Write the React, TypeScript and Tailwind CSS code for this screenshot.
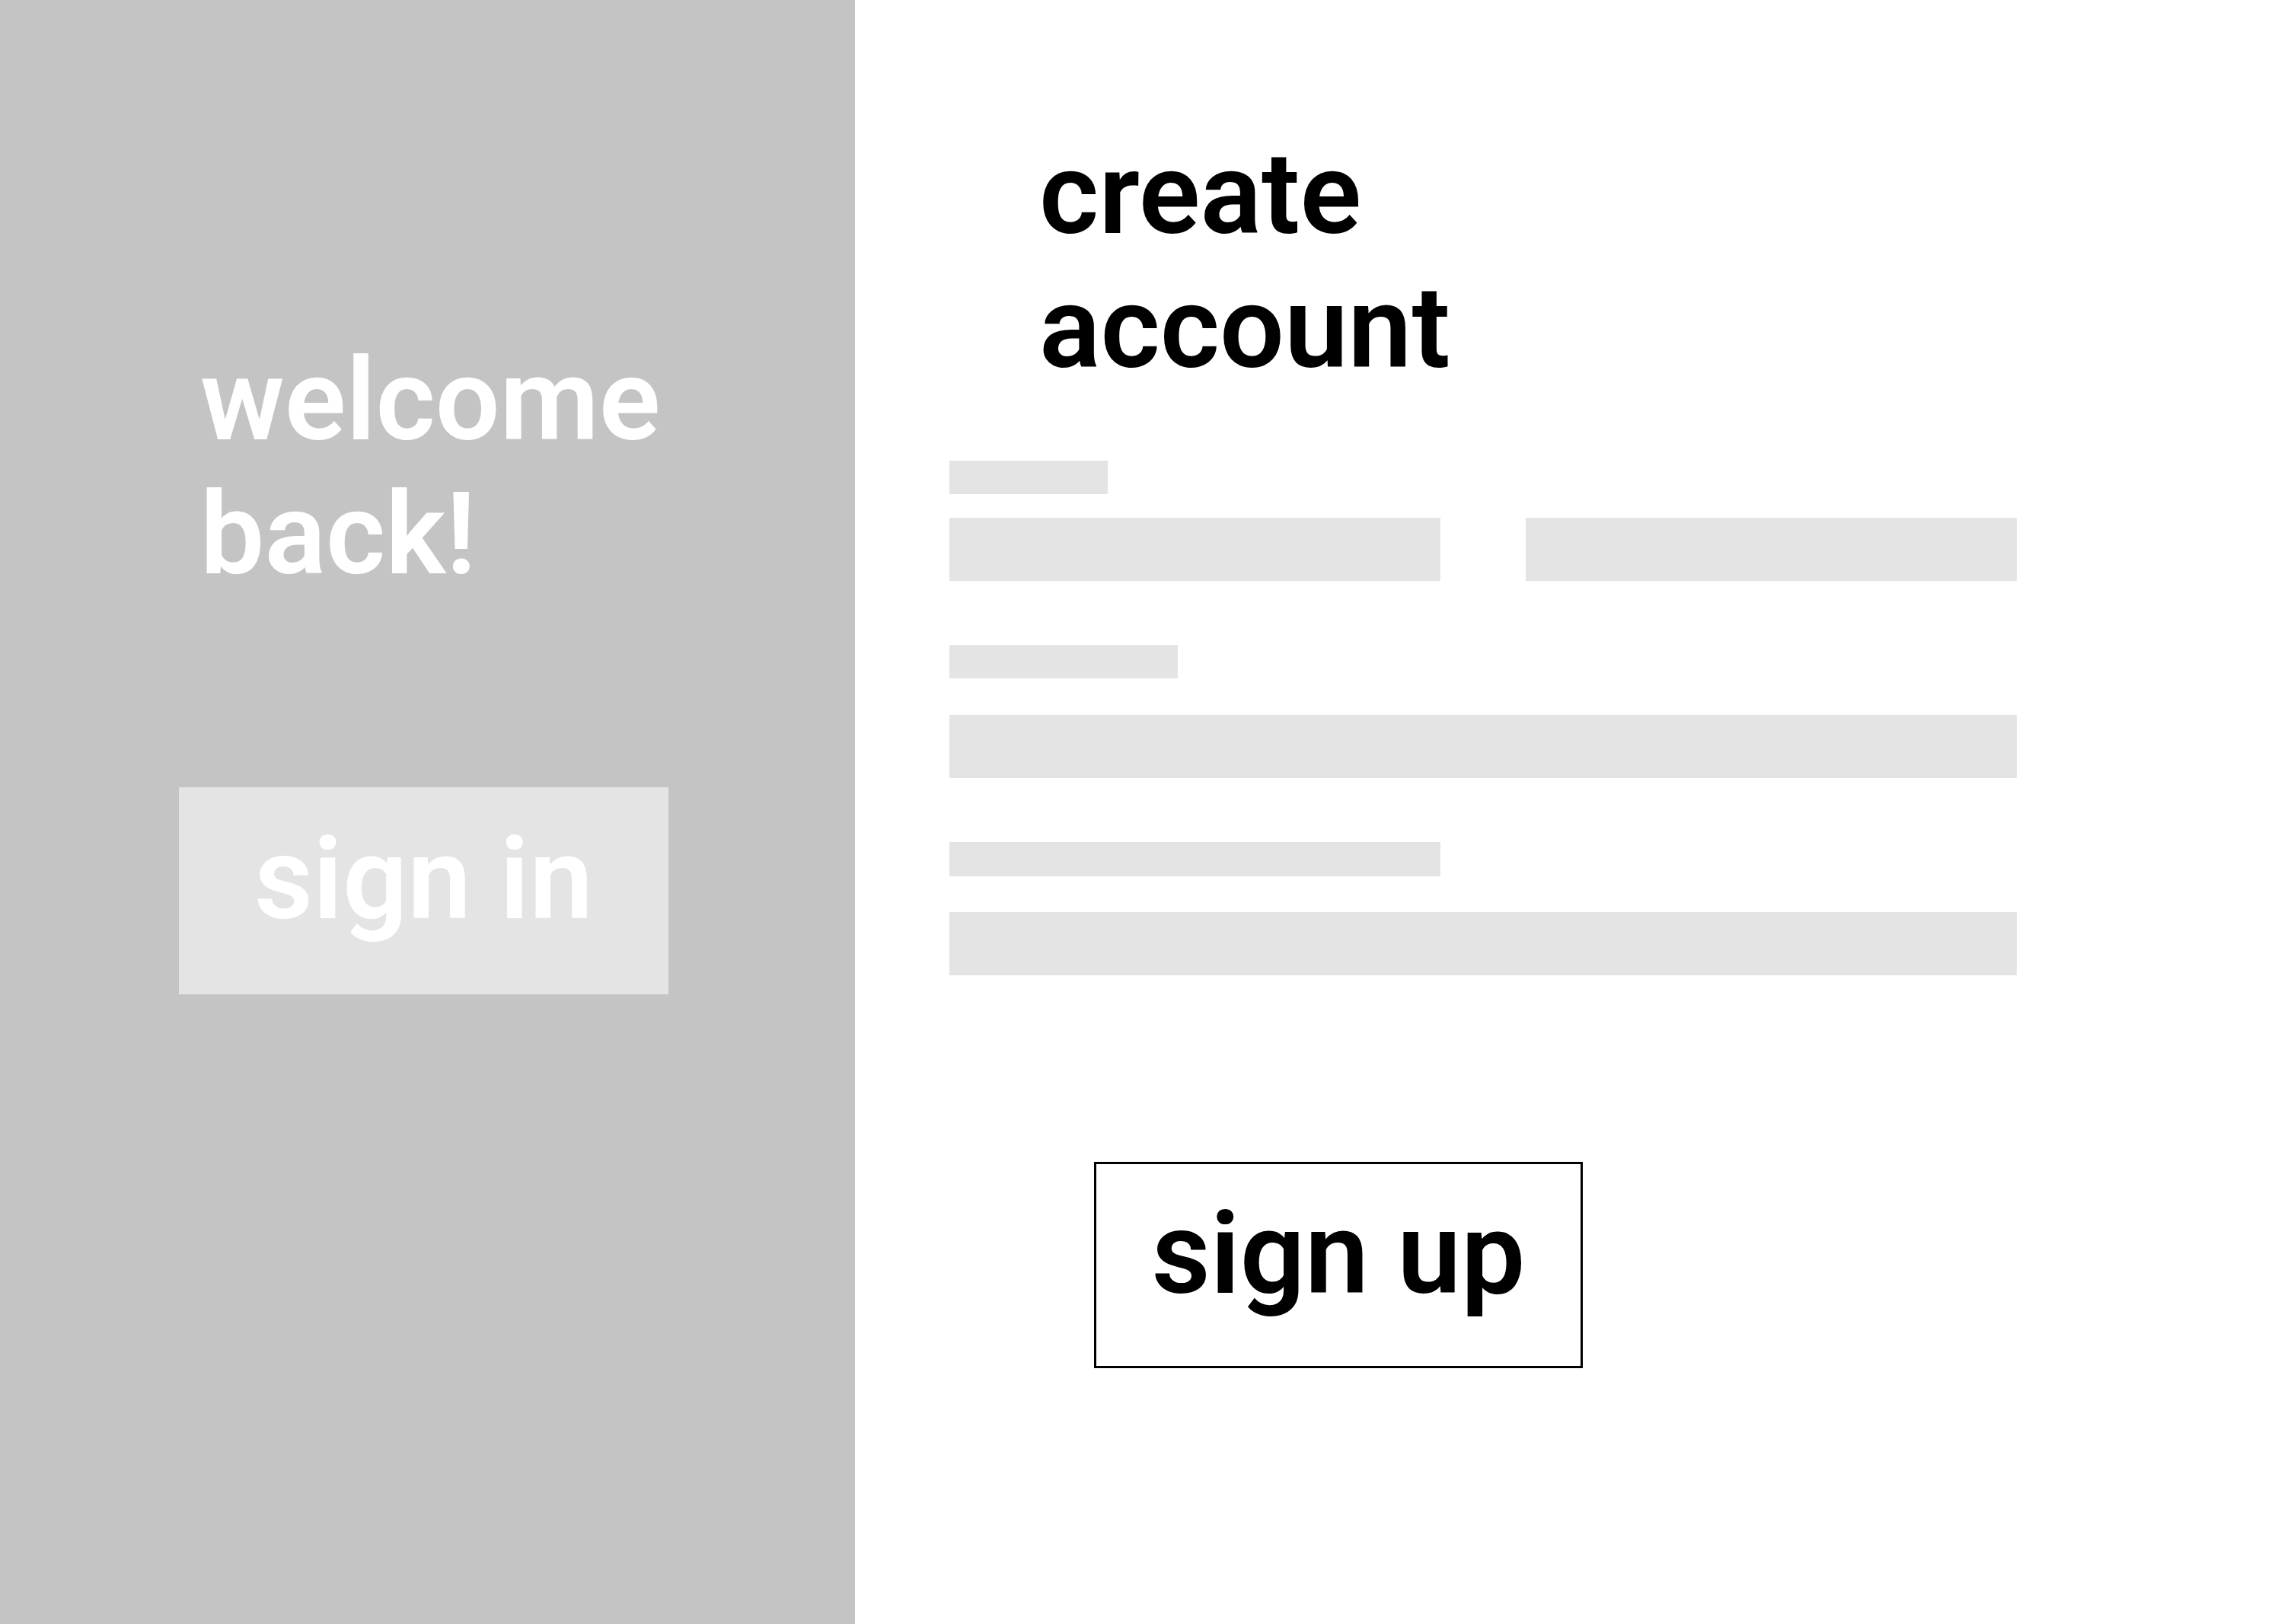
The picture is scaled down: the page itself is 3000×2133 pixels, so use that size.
import React from "react";

const font = { fontFamily: "Roboto, 'Liberation Sans', sans-serif" };

function Bar({ className }: { className: string }) {
  return <div className={`bg-[#e4e4e4] ${className}`} />;
}

export default function App() {
  return (
    <div className="flex w-[3000px] h-[2133px] bg-white" style={font}>
      {/* sign in side */}
      <div className="w-[1123px] h-full bg-[#c4c4c4] pl-[235px] pt-[438px] flex flex-col items-start">
        <h2 className="pl-[28px] text-[150px] leading-[176px] font-semibold text-white">
          welcome
          <br />
          back!
        </h2>
        <button className="mt-[244px] w-[643px] h-[272px] bg-[#e4e4e4] flex justify-center items-start pt-[33px] text-[150px] leading-[176px] font-semibold text-white">
          sign in
        </button>
      </div>

      {/* sign up side */}
      <div className="flex-1 pl-[124px] pt-[167px] flex flex-col items-start">
        <h1 className="pl-[118px] text-[150px] leading-[176px] font-semibold text-black">
          create
          <br />
          account
        </h1>

        <form className="mt-[86px] w-[1402px] flex flex-col">
          <Bar className="w-[208px] h-[44px]" />
          <div className="mt-[31px] flex justify-between">
            <Bar className="w-[645px] h-[83px]" />
            <Bar className="w-[645px] h-[83px]" />
          </div>

          <Bar className="mt-[84px] w-[300px] h-[44px]" />
          <Bar className="mt-[48px] w-full h-[83px]" />

          <Bar className="mt-[84px] w-[645px] h-[45px]" />
          <Bar className="mt-[47px] w-full h-[83px]" />
        </form>

        <button className="mt-[245px] ml-[190px] w-[642px] h-[271px] border-[3px] border-black flex justify-center items-start pt-[30px] text-[150px] leading-[176px] font-semibold text-black">
          sign up
        </button>
      </div>
    </div>
  );
}
